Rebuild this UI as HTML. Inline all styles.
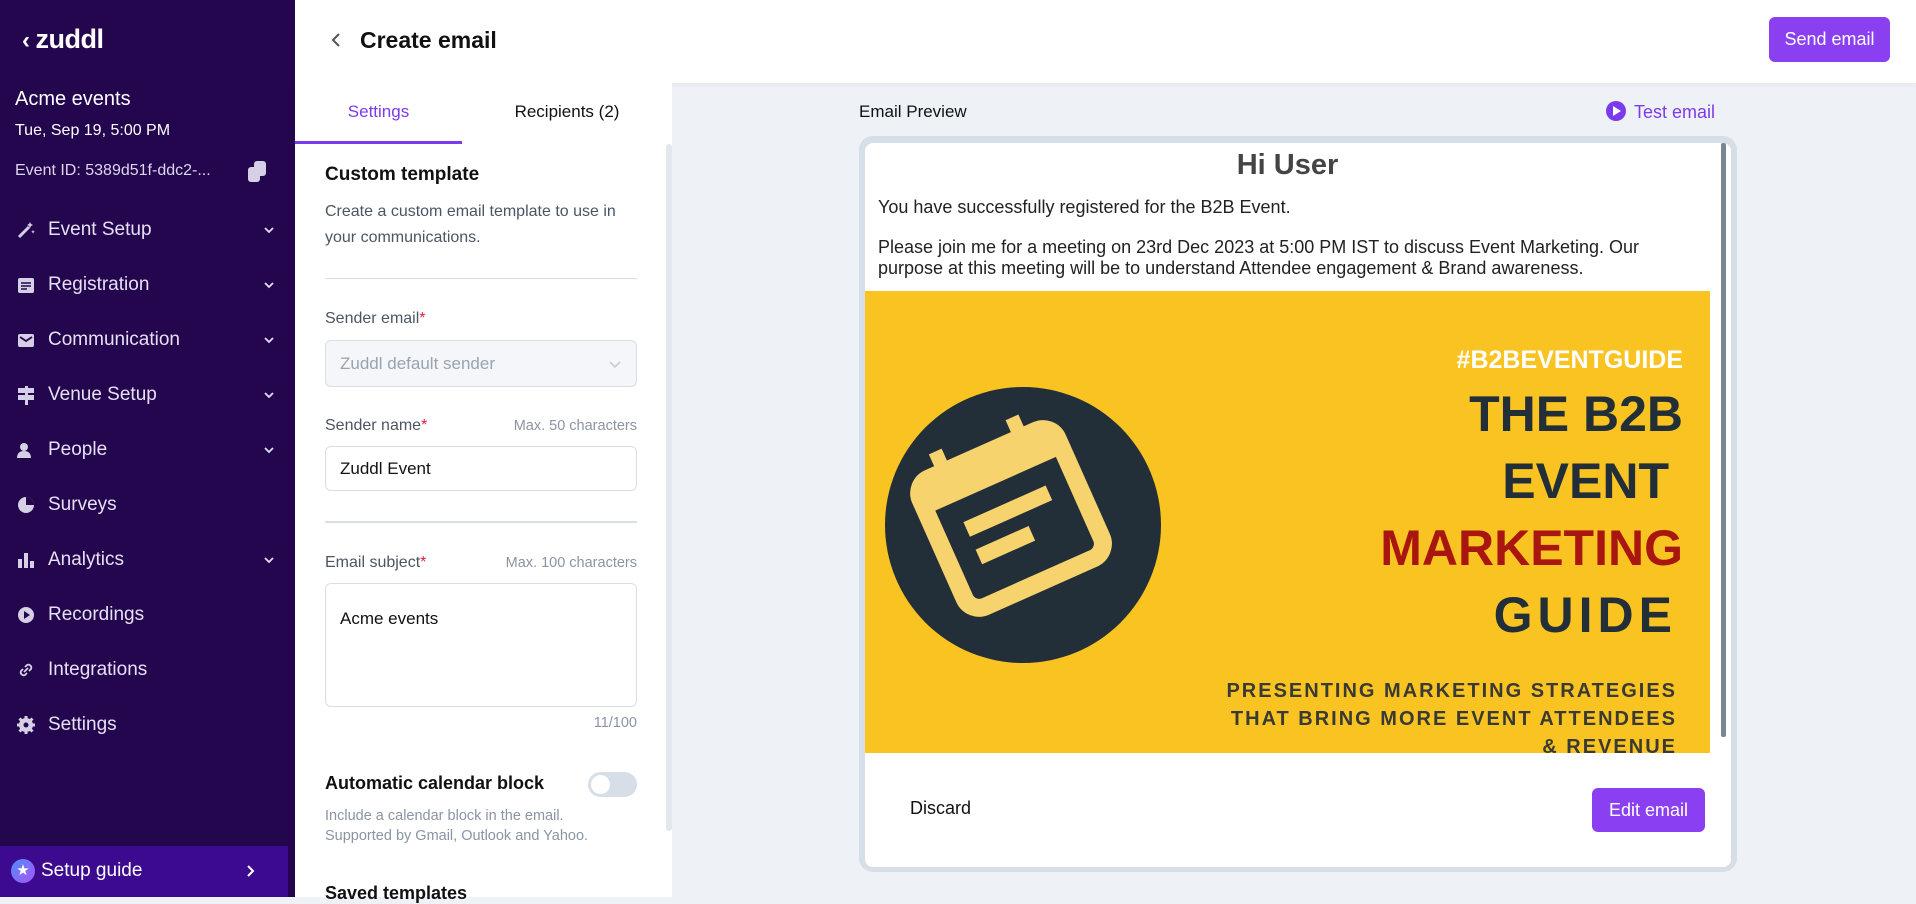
<!DOCTYPE html>
<html><head><meta charset="utf-8"><style>
*{box-sizing:border-box;margin:0;padding:0}
body{width:1916px;height:897px;overflow:hidden;font-family:"Liberation Sans",sans-serif;background:#eef2f7;position:relative;color:#111}
.abs{position:absolute}
#side{left:0;top:0;width:295px;height:897px;background:#24064f;color:#fff}
.nav{position:absolute;left:0;width:295px;height:30px;font-size:19px;color:#e6e0f2}
.nav .ic{position:absolute;left:16px;top:4px;width:20px;height:20px}
.nav span{position:absolute;left:48px;top:3px}
.nav .ch{position:absolute;left:263px;top:10px;width:12px;height:8px}
#hdr{left:295px;top:0;width:1621px;height:83px;background:#fff;box-shadow:0 2px 6px rgba(0,0,0,.05)}
#mid{left:295px;top:83px;width:377px;height:814px;background:#fff}
.lbl{position:absolute;left:30px;font-size:16px;color:#4b5563}
.req{color:#e11d48}
.hint{position:absolute;right:35px;font-size:14.5px;color:#8a94a3}
.box{position:absolute;left:30px;width:312px;border:1px solid #d6dee8;border-radius:6px;background:#fff}
</style></head><body>
<div id="side" class="abs">
 <div class="abs" style="left:22px;top:24px;font-size:27px;font-weight:bold;letter-spacing:-0.5px"><span style="font-size:24px;margin-right:6px">‹</span>zuddl</div>
 <div class="abs" style="left:15px;top:88px;font-size:20px">Acme events</div>
 <div class="abs" style="left:15px;top:122px;font-size:16px">Tue, Sep 19, 5:00 PM</div>
 <div class="abs" style="left:15px;top:162px;font-size:16px;color:#ddd6ec">Event ID: 5389d51f-ddc2-...</div>
 <svg class="abs" style="left:246px;top:160px" width="22" height="24"><rect x="2" y="7" width="12" height="15" rx="3" fill="#d6d0e6"/><rect x="8" y="1" width="12" height="15" rx="3" fill="#d6d0e6"/></svg>
 <div class="nav" style="top:216px"><svg class="ic" viewBox="0 0 20 20"><path d="M3 17 L13 7" stroke="#d6d0e6" stroke-width="3"/><path d="M14 2l1 2 2 1-2 1-1 2-1-2-2-1 2-1z M17 10l.6 1.2 1.2.6-1.2.6-.6 1.2-.6-1.2-1.2-.6 1.2-.6z" fill="#d6d0e6"/></svg><span>Event Setup</span><svg class="ch" viewBox="0 0 12 8"><path d="M2 2l4 4 4-4" stroke="#e6e0f2" stroke-width="1.8" fill="none"/></svg></div>
 <div class="nav" style="top:271px"><svg class="ic" viewBox="0 0 20 20"><rect x="2" y="3" width="16" height="15" rx="2" fill="#d6d0e6"/><path d="M5 8h10M5 11h10M5 14h6" stroke="#24064f" stroke-width="1.6"/></svg><span>Registration</span><svg class="ch" viewBox="0 0 12 8"><path d="M2 2l4 4 4-4" stroke="#e6e0f2" stroke-width="1.8" fill="none"/></svg></div>
 <div class="nav" style="top:326px"><svg class="ic" viewBox="0 0 20 20"><rect x="2" y="4" width="16" height="13" rx="2" fill="#d6d0e6"/><path d="M4 7l6 4 6-4" stroke="#24064f" stroke-width="1.8" fill="none"/></svg><span>Communication</span><svg class="ch" viewBox="0 0 12 8"><path d="M2 2l4 4 4-4" stroke="#e6e0f2" stroke-width="1.8" fill="none"/></svg></div>
 <div class="nav" style="top:381px"><svg class="ic" viewBox="0 0 20 20"><rect x="2" y="3" width="16" height="5" fill="#d6d0e6"/><rect x="2" y="10" width="16" height="5" fill="#d6d0e6"/><rect x="9" y="1" width="3" height="19" fill="#d6d0e6"/></svg><span>Venue Setup</span><svg class="ch" viewBox="0 0 12 8"><path d="M2 2l4 4 4-4" stroke="#e6e0f2" stroke-width="1.8" fill="none"/></svg></div>
 <div class="nav" style="top:436px"><svg class="ic" viewBox="0 0 20 20"><circle cx="8" cy="7" r="4" fill="#d6d0e6"/><path d="M1 18c0-5 3-7 7-7s7 2 7 7z" fill="#d6d0e6"/></svg><span>People</span><svg class="ch" viewBox="0 0 12 8"><path d="M2 2l4 4 4-4" stroke="#e6e0f2" stroke-width="1.8" fill="none"/></svg></div>
 <div class="nav" style="top:491px"><svg class="ic" viewBox="0 0 20 20"><circle cx="10" cy="10" r="8" fill="#d6d0e6"/><path d="M10 10V2A8 8 0 0 1 18 10z" fill="#24064f"/></svg><span>Surveys</span></div>
 <div class="nav" style="top:546px"><svg class="ic" viewBox="0 0 20 20"><rect x="2" y="9" width="4" height="9" fill="#d6d0e6"/><rect x="8" y="3" width="4" height="15" fill="#d6d0e6"/><rect x="14" y="11" width="4" height="7" fill="#d6d0e6"/></svg><span>Analytics</span><svg class="ch" viewBox="0 0 12 8"><path d="M2 2l4 4 4-4" stroke="#e6e0f2" stroke-width="1.8" fill="none"/></svg></div>
 <div class="nav" style="top:601px"><svg class="ic" viewBox="0 0 20 20"><circle cx="10" cy="10" r="8" fill="#d6d0e6"/><path d="M8 6l6 4-6 4z" fill="#24064f"/></svg><span>Recordings</span></div>
 <div class="nav" style="top:656px"><svg class="ic" viewBox="0 0 20 20"><path d="M9 7l2-2a3 3 0 0 1 4 4l-2 2M11 13l-2 2a3 3 0 0 1-4-4l2-2M8 12l4-4" stroke="#d6d0e6" stroke-width="1.8" fill="none"/></svg><span>Integrations</span></div>
 <div class="nav" style="top:711px"><svg class="ic" viewBox="0 0 20 20"><circle cx="10" cy="10" r="7" fill="#d6d0e6"/><path d="M10 1v4M10 15v4M1 10h4M15 10h4M3.5 3.5l3 3M13.5 13.5l3 3M3.5 16.5l3-3M13.5 6.5l3-3" stroke="#d6d0e6" stroke-width="3"/><circle cx="10" cy="10" r="2.5" fill="#24064f"/></svg><span>Settings</span></div>
 <div class="abs" style="left:0;top:846px;width:288px;height:51px;background:#3b0a8f">
  <div class="abs" style="left:11px;top:13px;width:24px;height:24px;border-radius:50%;background:linear-gradient(135deg,#4f8cf7,#a855f7);color:#fff;font-size:15px;text-align:center;line-height:24px">★</div>
  <div class="abs" style="left:41px;top:14px;font-size:19px">Setup guide</div>
  <svg class="abs" style="left:246px;top:18px" width="10" height="14"><path d="M2 2l5 5-5 5" stroke="#fff" stroke-width="2" fill="none"/></svg>
 </div>
</div>
<div id="hdr" class="abs">
 <svg class="abs" style="left:35px;top:32px" width="12" height="16"><path d="M9 2L3 8l6 6" stroke="#555" stroke-width="2" fill="none"/></svg>
 <div class="abs" style="left:65px;top:27px;font-size:23px;font-weight:bold;color:#111">Create email</div>
 <div class="abs" style="left:1474px;top:17px;width:121px;height:45px;background:#8a3ff0;border-radius:6px;color:#fff;font-size:18px;text-align:center;line-height:45px">Send email</div>
</div>
<div id="mid" class="abs">
 <div class="abs" style="left:0;top:19px;width:167px;text-align:center;font-size:17px;color:#7c3aed">Settings</div>
 <div class="abs" style="left:167px;top:19px;width:210px;text-align:center;font-size:17px;color:#111">Recipients (2)</div>
 <div class="abs" style="left:0;top:58px;width:167px;height:3px;background:#7c3aed"></div>
 <div class="abs" style="left:371px;top:61px;width:6px;height:687px;background:#e3e8ee;border-radius:3px"></div>
 <div class="abs" style="left:30px;top:81px;font-size:19px;font-weight:bold">Custom template</div>
 <div class="abs" style="left:30px;top:116px;width:300px;font-size:16px;line-height:26px;color:#4b5563">Create a custom email template to use in your communications.</div>
 <div class="abs" style="left:30px;top:195px;width:312px;height:1px;background:#d6dee8"></div>
 <div class="lbl" style="top:227px">Sender email<span class="req">*</span></div>
 <div class="box" style="top:257px;height:47px;background:#f4f6f9;color:#9aa3af;font-size:17px;padding:13px 0 0 14px">Zuddl default sender<svg class="abs" style="right:14px;top:19px" width="14" height="9"><path d="M2 2l5 5 5-5" stroke="#c6ccd5" stroke-width="1.6" fill="none"/></svg></div>
 <div class="lbl" style="top:334px">Sender name<span class="req">*</span></div>
 <div class="hint" style="top:335px">Max. 50 characters</div>
 <div class="box" style="top:363px;height:45px;font-size:17px;padding:12px 0 0 14px">Zuddl Event</div>
 <div class="abs" style="left:30px;top:438px;width:312px;height:2px;background:#d6dee8"></div>
 <div class="lbl" style="top:471px">Email subject<span class="req">*</span></div>
 <div class="hint" style="top:472px">Max. 100 characters</div>
 <div class="box" style="top:500px;height:124px;font-size:17px;padding:25px 0 0 14px">Acme events</div>
 <div class="hint" style="top:632px">11/100</div>
 <div class="abs" style="left:30px;top:690px;font-size:18px;font-weight:bold">Automatic calendar block</div>
 <div class="abs" style="left:293px;top:689px;width:49px;height:25px;border-radius:13px;background:#d6dee8"><div class="abs" style="left:3px;top:3px;width:19px;height:19px;border-radius:50%;background:#fff"></div></div>
 <div class="abs" style="left:30px;top:723px;font-size:14.5px;line-height:20px;color:#8a94a3">Include a calendar block in the email.<br>Supported by Gmail, Outlook and Yahoo.</div>
 <div class="abs" style="left:30px;top:800px;font-size:18px;font-weight:bold">Saved templates</div>
</div>
<div class="abs" style="left:859px;top:102px;font-size:17px;color:#111">Email Preview</div>
<div class="abs" style="left:1606px;top:101px;font-size:18px;color:#7c3aed"><span style="display:inline-block;width:20px;height:20px;border-radius:50%;background:#7c3aed;vertical-align:-3px;margin-right:8px;position:relative"><span class="abs" style="left:7px;top:5px;border-left:8px solid #fff;border-top:5px solid transparent;border-bottom:5px solid transparent"></span></span>Test email</div>
<div class="abs" style="left:859px;top:136px;width:878px;height:736px;background:#d6dee8;border-radius:14px"></div>
<div class="abs" style="left:865px;top:143px;width:866px;height:724px;background:#fff;border-radius:8px;overflow:hidden">
 <div class="abs" style="left:0;top:6px;width:845px;text-align:center;font-size:29px;font-weight:bold;color:#444">Hi User</div>
 <div class="abs" style="left:13px;top:54px;font-size:18px;color:#222">You have successfully registered for the B2B Event.</div>
 <div class="abs" style="left:13px;top:94px;width:830px;font-size:18px;line-height:21px;color:#222">Please join me for a meeting on 23rd Dec 2023 at 5:00 PM IST to discuss Event Marketing. Our purpose at this meeting will be to understand Attendee engagement &amp; Brand awareness.</div>
 <div class="abs" style="left:0;top:148px;width:845px;height:462px;background:#f9c322;overflow:hidden">
  <svg class="abs" style="left:20px;top:94px" width="280" height="280" viewBox="0 0 280 280"><circle cx="138" cy="140" r="138" fill="#232f38"/><g transform="rotate(-24 130 135)"><rect x="52" y="62" width="150" height="140" rx="16" fill="none" stroke="#f7d36e" stroke-width="18"/><rect x="52" y="62" width="150" height="32" fill="#f7d36e"/><rect x="78" y="40" width="14" height="30" fill="#f7d36e"/><rect x="162" y="40" width="14" height="30" fill="#f7d36e"/><rect x="82" y="116" width="90" height="16" fill="#f7d36e"/><rect x="82" y="146" width="58" height="16" fill="#f7d36e"/></g></svg>
  <div class="abs" style="right:27px;top:55px;font-size:25px;font-weight:bold;color:#fff;text-align:right">#B2BEVENTGUIDE</div>
  <div class="abs" style="right:27px;top:90px;font-size:50px;font-weight:bold;color:#232f38;text-align:right;line-height:67px">THE B2B<br><span style="margin-right:14px">EVENT</span><br><span style="color:#a8160f">MARKETING</span><br><span style="letter-spacing:5px;margin-right:6px">GUIDE</span></div>
  <div class="abs" style="right:33px;top:386px;font-size:20px;font-weight:bold;color:#3a3a34;letter-spacing:2px;line-height:28px;text-align:right">PRESENTING MARKETING STRATEGIES<br>THAT BRING MORE EVENT ATTENDEES<br>&amp; REVENUE</div>
 </div>
 <div class="abs" style="left:856px;top:0;width:5px;height:594px;background:#7b8694;border-radius:2px"></div>
 <div class="abs" style="left:0;top:610px;width:866px;height:114px;background:#fff">
  <div class="abs" style="left:45px;top:45px;font-size:18px;color:#111">Discard</div>
  <div class="abs" style="left:727px;top:35px;width:113px;height:44px;background:#8a3ff0;border-radius:6px;color:#fff;font-size:18px;text-align:center;line-height:44px">Edit email</div>
 </div>
</div>
</body></html>
